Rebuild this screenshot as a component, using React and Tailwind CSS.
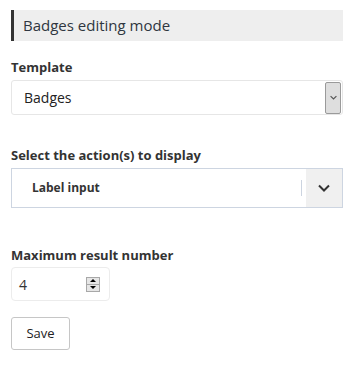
import React from 'react';

const Chevron = ({ className }) => (
    <svg viewBox="0 0 12 8" className={className} fill="none" stroke="currentColor" strokeWidth="2">
        <path d="M1 1.5l5 5 5-5" />
    </svg>
);

const App = () => {
    return (
        <div className="w-[352px] h-[376px] bg-white text-[#333] pt-[10px] pl-[11px] pr-[9px]" style={{ fontFamily: '"Open Sans", "Noto Sans", sans-serif' }}>
            <div className="h-[31px] bg-[#eeeeee] border-l-[3px] border-[#333] flex items-center pl-[9px] text-[15px] text-[#2f3640]">
                Badges editing mode
            </div>

            <div className="mt-[17px] text-[13px] font-bold leading-[18px]">Template</div>
            <div className="mt-[4px] h-[35px] border border-[#e6e6e6] rounded-[3px] flex items-center justify-between pl-[12px] pr-[1px] pr-0">
                <span className="text-[14px] text-[#222]">Badges</span>
                <div className="w-[16px] h-[32px] bg-[#dedede] border border-[#9a9a9a] rounded-[2px] flex items-center justify-center text-[#555]">
                    <Chevron className="w-[7px] h-[5px]" />
                </div>
            </div>

            <div className="mt-[31px] text-[13px] font-bold leading-[18px]">Select the action(s) to display</div>
            <div className="mt-[4px] h-[40px] border border-[#cdd5e1] flex items-stretch">
                <div className="flex-1 flex items-center pl-[20px] text-[12px] font-bold text-[#333]">Label input</div>
                <div className="flex items-center">
                    <div className="w-px h-[16px] bg-[#ccd4e0]" />
                </div>
                <div className="w-[36px] ml-[4px] bg-[#f0f0f0] flex items-center justify-center text-[#333]">
                    <Chevron className="w-[12px] h-[8px]" />
                </div>
            </div>

            <div className="mt-[38px] text-[13px] font-bold leading-[18px]">Maximum result number</div>
            <div className="mt-[3px] w-[99px] h-[34px] border border-[#ececec] rounded-[4px] flex items-center justify-between pl-[7px] pr-[9px]">
                <span className="text-[14px] text-[#333]">4</span>
                <div className="w-[14px] h-[15px] border border-[#a8a8a8] bg-[#e6e6e6] flex flex-col">
                    <div className="flex-1 flex items-center justify-center border-b border-[#a8a8a8]">
                        <div className="w-0 h-0 border-l-[3px] border-r-[3px] border-b-[3px] border-l-transparent border-r-transparent border-b-black" />
                    </div>
                    <div className="flex-1 flex items-center justify-center">
                        <div className="w-0 h-0 border-l-[3px] border-r-[3px] border-t-[3px] border-l-transparent border-r-transparent border-t-black" />
                    </div>
                </div>
            </div>

            <button className="mt-[16px] w-[59px] h-[33px] border border-[#c6c6c6] rounded-[3px] bg-white text-[13px] text-[#222]">
                Save
            </button>
        </div>
    );
};

export default App;
